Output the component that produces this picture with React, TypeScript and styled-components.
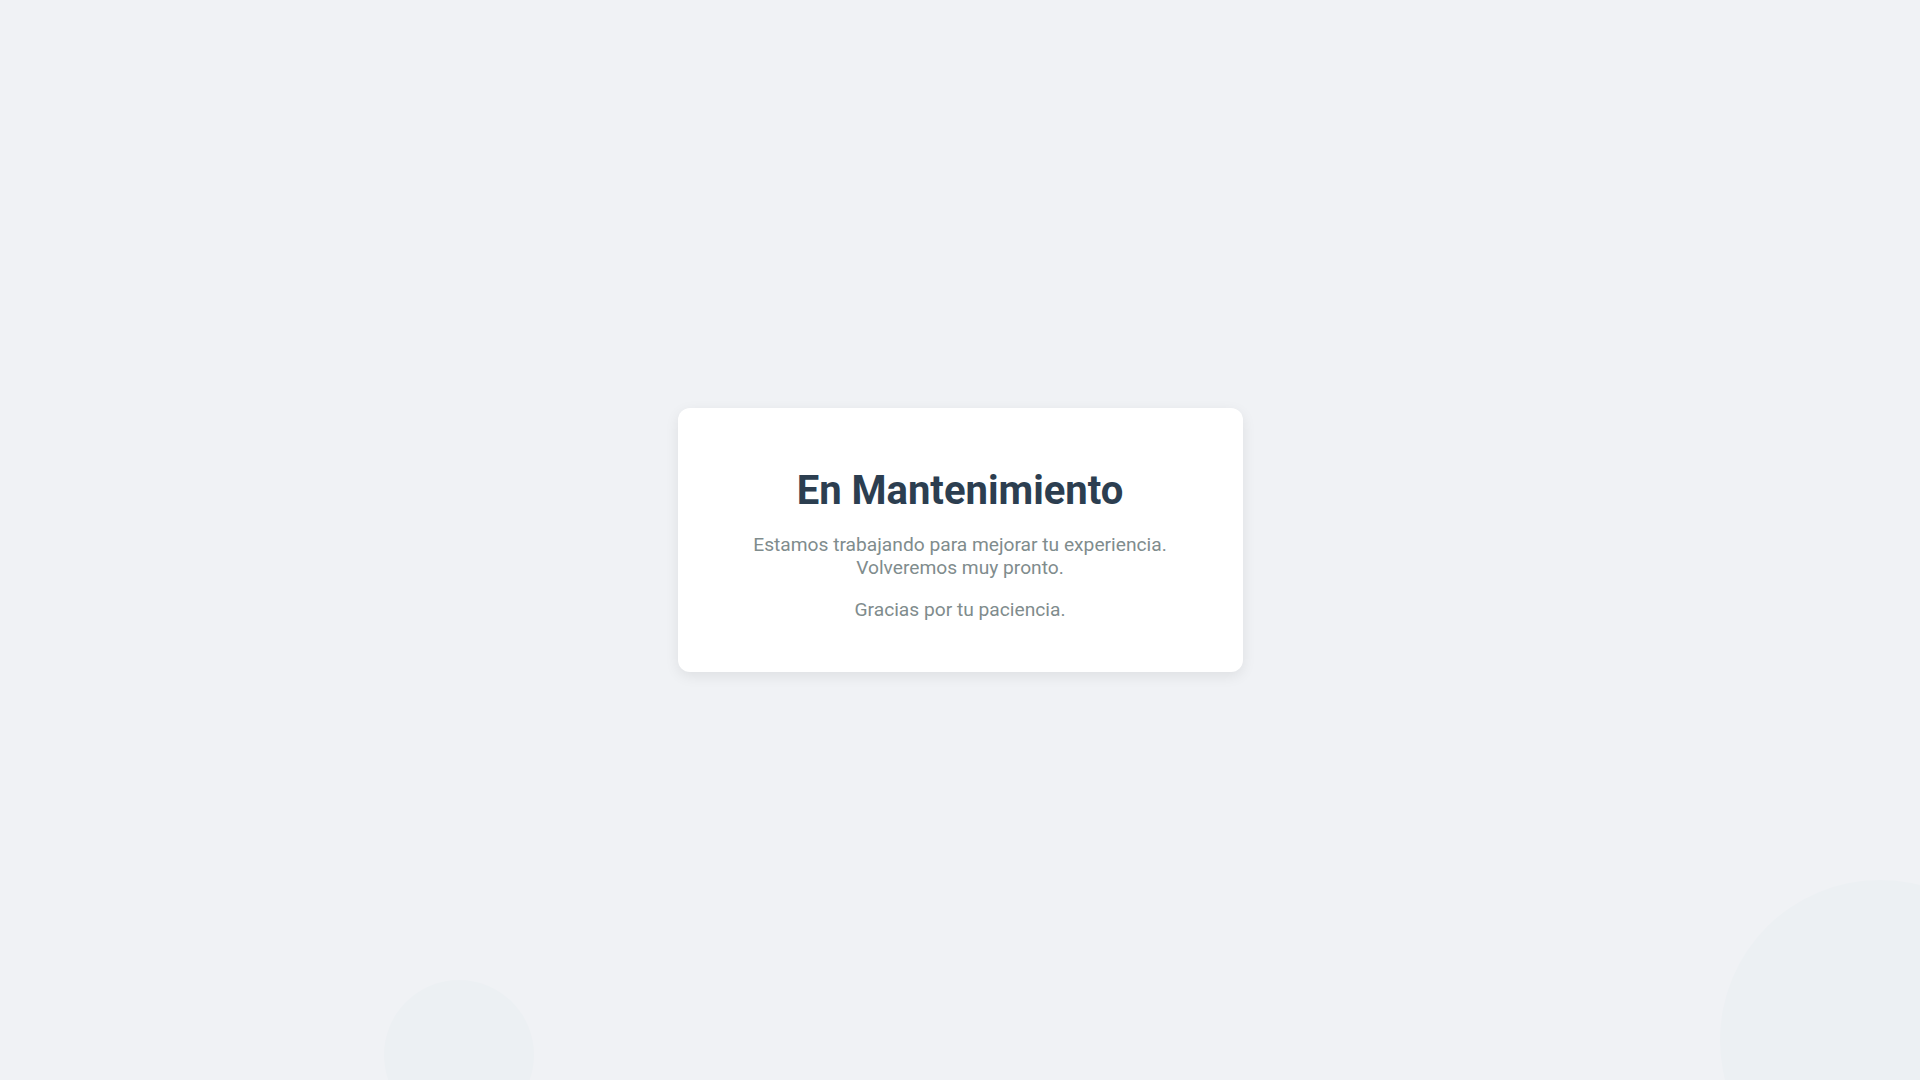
import React from 'react'
import styled, { createGlobalStyle } from 'styled-components'

const GlobalStyle = createGlobalStyle`
  * {
    box-sizing: border-box;
  }

  html, body {
    margin: 0;
    padding: 0;
  }

  body {
    background: #f0f2f5;
    font-family: Roboto, "Liberation Sans", Arial, sans-serif;
  }
`

const Page = styled.main`
  position: relative;
  min-height: 100vh;
  display: flex;
  align-items: center;
  justify-content: center;
  overflow: hidden;
`

const Bubble = styled.div<{ $size: number; $left: number; $top: number }>`
  position: absolute;
  left: ${p => p.$left}px;
  top: ${p => p.$top}px;
  width: ${p => p.$size}px;
  height: ${p => p.$size}px;
  border-radius: 50%;
  background: #ecf0f3;
`

const Card = styled.section`
  position: relative;
  z-index: 1;
  width: 565px;
  padding: 60px 40px 51px;
  background: #ffffff;
  border-radius: 12px;
  box-shadow: 0 4px 14px rgba(0, 0, 0, 0.08);
  text-align: center;
`

const Title = styled.h1`
  margin: 0 0 18px;
  font-size: 40px;
  font-weight: 700;
  line-height: 1.172;
  color: #2c3e50;
`

const Text = styled.p`
  margin: 0 0 19px;
  font-size: 19.2px;
  line-height: 23px;
  color: #7f8c8d;

  &:last-child {
    margin-bottom: 0;
  }
`

export default function App() {
  return (
    <>
      <GlobalStyle />
      <Page>
        <Bubble $size={150} $left={384} $top={980} />
        <Bubble $size={320} $left={1720} $top={880} />
        <Card>
          <Title>En Mantenimiento</Title>
          <Text>
            Estamos trabajando para mejorar tu experiencia.
            <br />
            Volveremos muy pronto.
          </Text>
          <Text>Gracias por tu paciencia.</Text>
        </Card>
      </Page>
    </>
  )
}
